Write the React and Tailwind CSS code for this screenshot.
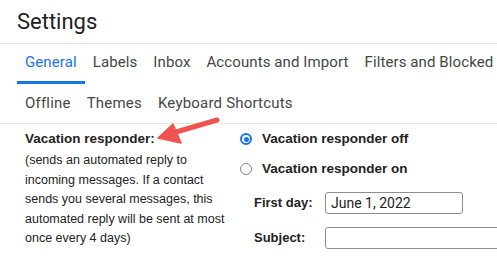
export default function App() {
  const tabs = ["General", "Labels", "Inbox", "Accounts and Import", "Filters and Blocked Addresses"];
  const tabs2 = ["Offline", "Themes", "Keyboard Shortcuts"];

  return (
    <div className="relative w-[497px] h-[256px] overflow-hidden bg-white font-['Roboto',sans-serif]">
      {/* title */}
      <div className="h-[43px] pl-[17px] flex items-center border-b border-[#e3e3e3] box-content">
        <h1 className="text-[22px] text-[#202124] leading-none">Settings</h1>
      </div>

      {/* tabs */}
      <div className="flex pl-[17px] h-[40px] whitespace-nowrap">
        {tabs.map((t, i) => (
          <div
            key={t}
            className={
              "px-2 flex items-center text-[15px] tracking-[0.1px] border-b-[3px] rounded-t-[1px] " +
              (i === 0 ? "text-[#1a73e8] border-[#1a73e8]" : "text-[#444746] border-transparent")
            }
          >
            {t}
          </div>
        ))}
      </div>
      <div className="flex pl-[17px] h-[39px] border-b border-[#e3e3e3] box-content whitespace-nowrap">
        {tabs2.map((t) => (
          <div key={t} className="px-2 flex items-center text-[15px] tracking-[0.2px] text-[#444746]">
            {t}
          </div>
        ))}
      </div>

      {/* vacation responder */}
      <div className="flex pl-[25px] pt-[5px] text-[#222] font-['Liberation_Sans',Arial,sans-serif]">
        <div className="w-[215px] shrink-0">
          <div className="font-bold text-[13.5px] leading-[20px]">Vacation responder:</div>
          <div className="mt-[2px] text-[12.5px] leading-[19.5px] w-[209px]">
            (sends an automated reply to incoming messages. If a contact sends you several messages, this automated
            reply will be sent at most once every 4 days)
          </div>
          <div className="mt-[3px] text-[12.5px] leading-[19.5px] text-[#1155cc]">Learn more</div>
        </div>

        <div className="flex flex-col">
          <label className="flex items-center h-[20px] gap-[10px] font-bold text-[13.5px]">
            <span className="w-[12px] h-[12px] rounded-full border-[2px] border-[#1a73e8] flex items-center justify-center">
              <span className="w-[5px] h-[5px] rounded-full bg-[#1a73e8]" />
            </span>
            Vacation responder off
          </label>
          <label className="flex items-center h-[20px] gap-[10px] font-bold text-[13.5px] mt-[10px]">
            <span className="w-[12px] h-[12px] rounded-full border-[1.5px] border-[#80868b]" />
            Vacation responder on
          </label>

          <div className="flex items-center mt-[13px] pl-[14px]">
            <span className="w-[71px] font-bold text-[13px]">First day:</span>
            <div className="w-[138px] h-[22px] border border-[#8e8e96] rounded-[3px] px-[5px] flex items-center text-[14px] text-[#222] font-['Roboto',sans-serif]">
              June 1, 2022
            </div>
          </div>
          <div className="flex items-center mt-[13px] pl-[14px]">
            <span className="w-[71px] font-bold text-[13px]">Subject:</span>
            <div className="w-[200px] h-[22px] border border-[#8e8e96] rounded-[3px]" />
          </div>
        </div>
      </div>

      {/* annotation arrow */}
      <svg className="absolute left-0 top-0 pointer-events-none" width="497" height="256">
        <line x1="217" y1="120" x2="166" y2="135" stroke="#ef5350" strokeWidth="5" strokeLinecap="round" />
        <polygon points="158,138 173,124 181,143" fill="#ef5350" stroke="#ef5350" strokeWidth="1.5" strokeLinejoin="round" />
      </svg>
    </div>
  );
}
